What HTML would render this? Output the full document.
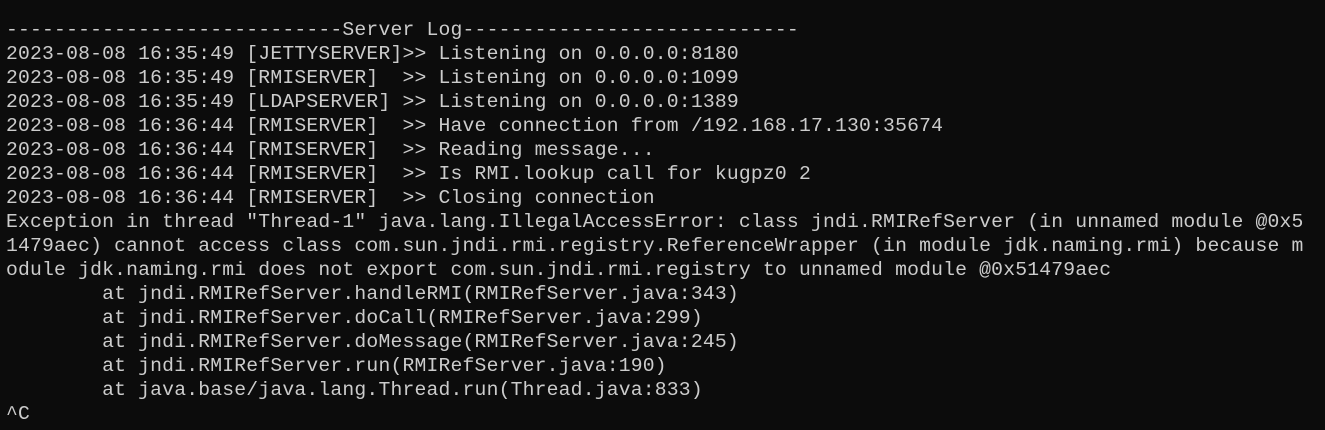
<!DOCTYPE html>
<html><head><style>
html,body{margin:0;padding:0;background:#0c0c0c;width:1325px;height:430px;overflow:hidden}
pre{margin:0;padding:18px 0 0 6px;font-family:"Liberation Mono",monospace;font-size:19.7px;letter-spacing:0.2px;line-height:24px;color:#cccccc;white-space:pre}
</style></head><body><pre>----------------------------Server Log----------------------------
2023-08-08 16:35:49 [JETTYSERVER]&gt;&gt; Listening on 0.0.0.0:8180
2023-08-08 16:35:49 [RMISERVER]  &gt;&gt; Listening on 0.0.0.0:1099
2023-08-08 16:35:49 [LDAPSERVER] &gt;&gt; Listening on 0.0.0.0:1389
2023-08-08 16:36:44 [RMISERVER]  &gt;&gt; Have connection from /192.168.17.130:35674
2023-08-08 16:36:44 [RMISERVER]  &gt;&gt; Reading message...
2023-08-08 16:36:44 [RMISERVER]  &gt;&gt; Is RMI.lookup call for kugpz0 2
2023-08-08 16:36:44 [RMISERVER]  &gt;&gt; Closing connection
Exception in thread "Thread-1" java.lang.IllegalAccessError: class jndi.RMIRefServer (in unnamed module @0x5
1479aec) cannot access class com.sun.jndi.rmi.registry.ReferenceWrapper (in module jdk.naming.rmi) because m
odule jdk.naming.rmi does not export com.sun.jndi.rmi.registry to unnamed module @0x51479aec
        at jndi.RMIRefServer.handleRMI(RMIRefServer.java:343)
        at jndi.RMIRefServer.doCall(RMIRefServer.java:299)
        at jndi.RMIRefServer.doMessage(RMIRefServer.java:245)
        at jndi.RMIRefServer.run(RMIRefServer.java:190)
        at java.base/java.lang.Thread.run(Thread.java:833)
^C</pre></body></html>
